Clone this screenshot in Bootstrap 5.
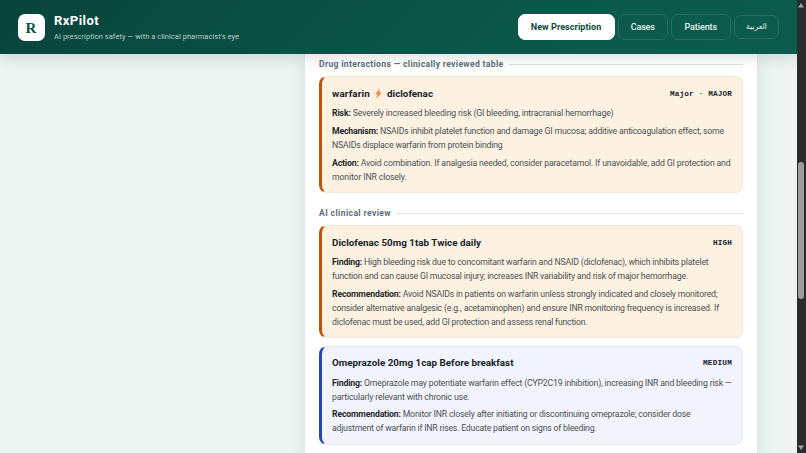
<!DOCTYPE html>
<html lang="en">

<head>
    <meta charset="UTF-8" />
    <meta name="viewport" content="width=device-width, initial-scale=1.0" />
    <title>RxPilot</title>
    <link href="https://cdn.jsdelivr.net/npm/bootstrap@5.3.7/dist/css/bootstrap.min.css" rel="stylesheet" />
    <style>
        body {
            background: #edf4f2;
            color: #15232b;
            font-family: Roboto, "Noto Sans", sans-serif;
            font-size: 8.7px;
            line-height: 14px;
        }

        .topbar {
            height: 54px;
            padding: 0 17.5px;
            background: linear-gradient(135deg, #09443b 0%, #0b5a4c 75%, #0c5c4e 100%);
            box-shadow: 0 3px 14px rgba(20, 50, 45, .16);
            z-index: 2;
        }

        .logo {
            width: 27px;
            height: 27px;
            margin-right: 9.5px;
            border-radius: 7px;
            color: #0b4f44;
            font: 700 15px/29px "Liberation Serif", serif;
        }

        .brand-name {
            font-size: 13px;
            line-height: 16px;
            padding-top: 2px;
        }

        .brand-sub {
            font-size: 7.5px;
            line-height: 12px;
            margin-top: 2px;
            color: #b3cfc9;
        }

        .topbar nav { gap: 3.5px; }

        .topbar .btn {
            height: 26px;
            padding: 0;
            border: 1px solid #286b5f;
            border-radius: 7px;
            font-size: 9px;
            font-weight: 500;
            line-height: 25px;
            color: #e6f1ee;
        }

        .topbar .btn-new {
            width: 97px;
            background: #fff;
            border-color: #fff;
            color: #0a473d;
            font-weight: 700;
        }

        .btn-cases { width: 49.5px; }
        .btn-patients { width: 59.5px; }

        .topbar .btn-lang {
            width: 45px;
            height: 24px;
            line-height: 22px;
            font-family: "DejaVu Sans", sans-serif;
            font-size: 7.6px;
            font-weight: 400;
        }

        .panel {
            width: 454px;
            margin-left: 304px;
            padding: 2px 14px 0;
            background: #fff;
            border: solid #e0e8e6;
            border-width: 0 1px;
            box-shadow: 0 3px 16px rgba(30, 70, 60, .12);
        }

        .section-title {
            height: 16px;
            margin-bottom: 4px;
            gap: 5px;
            font-size: 8.6px;
            font-weight: 700;
            color: #5f7079;
        }

        .section-title::after {
            content: "";
            flex: 1;
            border-top: 1px solid #dfe5e8;
        }

        .finding {
            padding: 9.5px 10px 0;
            border: 1px solid #f0e5d6;
            border-left: 3px solid #bf5206;
            border-radius: 8px;
            background: #fdf2e2;
        }

        .finding-medium {
            border-color: #e4e8f3;
            border-left-color: #2448b4;
            background: #f2f4fd;
        }

        .finding-head {
            height: 14px;
            margin-bottom: 5.5px;
            font-size: 9.8px;
            font-weight: 700;
        }

        .level {
            font: 700 7.7px/14px "Liberation Mono", monospace;
        }

        .finding p {
            margin-bottom: 3.8px;
            line-height: 14px;
            color: #4a5154;
        }

        .finding b { color: #1d292f; }
        .h-117 { height: 117px; }
        .h-113 { height: 113px; }
        .h-99 { height: 99px; }
        .gap-section { margin-top: 12px; }
        .gap-card { margin-top: 7.5px; }

        [data-w] {
            display: inline-block;
            white-space: nowrap;
        }

        p [data-w] { display: table; }

        .scroll-rail {
            width: 9.5px;
            padding: 3px 1px;
            background: #2b2b2b;
        }

        .scroll-rail svg { display: block; margin: 0 auto; }

        .scroll-thumb {
            width: 6px;
            height: 137px;
            margin: 154px auto auto;
            border-radius: 3px;
            background: #9d9d9d;
        }
    </style>
    <script src="https://cdn.jsdelivr.net/npm/bootstrap@5.3.7/dist/js/bootstrap.bundle.min.js"></script>
</head>

<body class="d-flex vh-100 overflow-hidden">

    <div class="d-flex flex-column flex-grow-1 overflow-hidden">
        <header class="topbar d-flex align-items-center justify-content-between flex-shrink-0 position-relative">
            <div class="d-flex align-items-center">
                <div class="logo bg-white text-center">R</div>
                <div>
                    <div class="brand-name fw-bold text-white"><span data-w="45">RxPilot</span></div>
                    <div class="brand-sub"><span data-w="185">AI prescription safety — with a clinical pharmacist's eye</span></div>
                </div>
            </div>
            <nav class="d-flex align-items-center">
                <a href="#" class="btn btn-new"><span data-w="70.5">New Prescription</span></a>
                <a href="#" class="btn btn-cases"><span data-w="24">Cases</span></a>
                <a href="#" class="btn btn-patients"><span data-w="32.5">Patients</span></a>
                <a href="#" class="btn btn-lang" lang="ar">العربية</a>
            </nav>
        </header>

        <main class="panel flex-grow-1">
            <div class="section-title d-flex align-items-center"><span data-w="184.5">Drug interactions — clinically reviewed table</span></div>

            <article class="finding h-117">
                <div class="finding-head d-flex justify-content-between">
                    <div class="d-flex align-items-center">
                        <span data-w="38">warfarin</span>
                        <svg class="mx-1" width="9" height="11" viewBox="0 0 9 11">
                            <path d="M5.8.3 1.4 6.2h2.3L2.5 10.7 7.7 4.6H5.1z" fill="#f5823b" />
                        </svg>
                        <span data-w="46">diclofenac</span>
                    </div>
                    <span class="level"><span data-w="62">Major · MAJOR</span></span>
                </div>
                <p>
                    <span data-w="281.5"><b>Risk:</b> Severely increased bleeding risk (GI bleeding, intracranial hemorrhage)</span>
                </p>
                <p>
                    <span data-w="392"><b>Mechanism:</b> NSAIDs inhibit platelet function and damage GI mucosa; additive anticoagulation effect, some</span>
                    <span data-w="170.5">NSAIDs displace warfarin from protein binding</span>
                </p>
                <p>
                    <span data-w="398.5"><b>Action:</b> Avoid combination. If analgesia needed, consider paracetamol. If unavoidable, add GI protection and</span>
                    <span data-w="74.5">monitor INR closely.</span>
                </p>
            </article>

            <div class="section-title gap-section d-flex align-items-center"><span data-w="72">AI clinical review</span></div>

            <article class="finding h-113">
                <div class="finding-head d-flex justify-content-between">
                    <span data-w="149">Diclofenac 50mg 1tab Twice daily</span>
                    <span class="level"><span data-w="19">HIGH</span></span>
                </div>
                <p>
                    <span data-w="376.5"><b>Finding:</b> High bleeding risk due to concomitant warfarin and NSAID (diclofenac), which inhibits platelet</span>
                    <span data-w="356">function and can cause GI mucosal injury; increases INR variability and risk of major hemorrhage.</span>
                </p>
                <p>
                    <span data-w="385.5"><b>Recommendation:</b> Avoid NSAIDs in patients on warfarin unless strongly indicated and closely monitored;</span>
                    <span data-w="387">consider alternative analgesic (e.g., acetaminophen) and ensure INR monitoring frequency is increased. If</span>
                    <span data-w="255.5">diclofenac must be used, add GI protection and assess renal function.</span>
                </p>
            </article>

            <article class="finding finding-medium h-99 gap-card">
                <div class="finding-head d-flex justify-content-between">
                    <span data-w="181.5">Omeprazole 20mg 1cap Before breakfast</span>
                    <span class="level"><span data-w="29">MEDIUM</span></span>
                </div>
                <p>
                    <span data-w="399.5"><b>Finding:</b> Omeprazole may potentiate warfarin effect (CYP2C19 inhibition), increasing INR and bleeding risk —</span>
                    <span data-w="137.5">particularly relevant with chronic use.</span>
                </p>
                <p>
                    <span data-w="358.5"><b>Recommendation:</b> Monitor INR closely after initiating or discontinuing omeprazole; consider dose</span>
                    <span data-w="264.5">adjustment of warfarin if INR rises. Educate patient on signs of bleeding.</span>
                </p>
            </article>
        </main>
    </div>

    <div class="scroll-rail d-flex flex-column flex-shrink-0">
        <svg width="6" height="5" viewBox="0 0 6 5"><path d="M3 0 6 4.5H0z" fill="#a3a3a3" /></svg>
        <div class="scroll-thumb"></div>
        <svg width="6" height="5" viewBox="0 0 6 5"><path d="M3 5 6 .5H0z" fill="#a3a3a3" /></svg>
    </div>

    <script>
        // track each line out (or in) to its data-w width
        document.querySelectorAll("[data-w]").forEach(el => {
            const diff = el.dataset.w - el.getBoundingClientRect().width;
            el.style.letterSpacing = `${diff / el.textContent.length}px`;
        });
    </script>
</body>

</html>
